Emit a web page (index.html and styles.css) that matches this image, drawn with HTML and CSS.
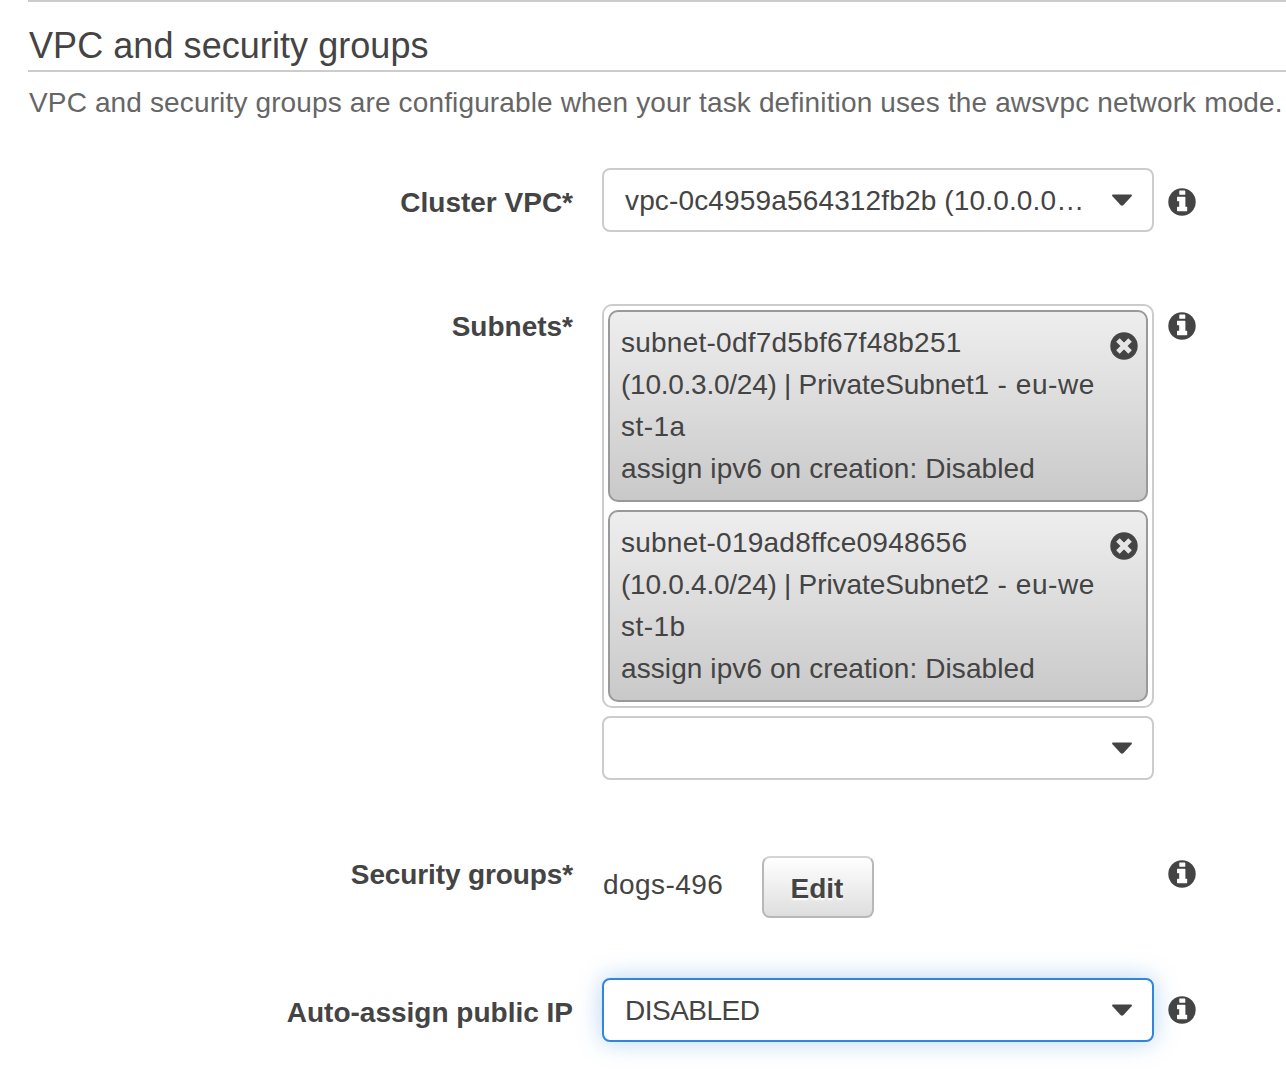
FILE: index.html
```html
<!DOCTYPE html>
<html lang="en">
<head>
<meta charset="utf-8">
<title>VPC and security groups</title>
<link rel="stylesheet" href="styles.css">
</head>
<body>
<svg class="sprite" width="0" height="0" aria-hidden="true">
  <symbol id="info" viewBox="0 0 28 28">
    <circle cx="14" cy="14" r="13.7" fill="#444"/>
    <path d="M11.3 3.2q0-.6.6-.6h4.800q.6 0 .6.6v3q0 .6-.6.6h-4.800q-.6 0-.6-.6zM9 9.300q0-.6.6-.6h7.200q.6 0 .6.6v9.500h1.200q.6 0 .6.6v3.200q0 .6-.6.6h-9q-.6 0-.6-.6v-3.200q0-.6.6-.6h1.600v-5.600h-1.600q-.6 0-.6-.6z" fill="#fff"/>
  </symbol>
  <symbol id="remove" viewBox="0 0 28 28">
    <circle cx="14" cy="14" r="13.7" fill="#444"/>
    <path d="M9.700 9.700l8.600 8.600M18.300 9.700l-8.600 8.600" stroke="#e6e6e6" stroke-width="5" stroke-linecap="square"/>
    <path d="M14 4.500l2.500 3.200L14 10.200l-2.500-2.500zM14 23.500l2.500-3.200L14 17.800l-2.500 2.500z" fill="#444"/>
  </symbol>
  <symbol id="caret" viewBox="0 0 20 12">
    <path d="M1 .4H19Q20.600.8 19.500 2.200L11.500 10.900Q10 12.500 8.500 10.900L.5 2.200Q-.6.8 1 .4Z" fill="#444"/>
  </symbol>
</svg>
<main class="section">
  <h2 class="title">VPC and security groups</h2>
  <p class="description">VPC and security groups are configurable when your task definition uses the awsvpc network mode.</p>

  <div class="row row-vpc">
    <div class="label">Cluster VPC*</div>
    <div class="select"><span class="value vpc-id">vpc-0c4959a564312fb2b (10.0.0.0…</span><svg class="caret"><use href="#caret"/></svg></div>
    <svg class="info"><use href="#info"/></svg>
  </div>

  <div class="row row-subnets">
    <div class="label">Subnets*</div>
    <div class="subnets">
      <div class="tokens">
        <div class="token">
          <div class="token-text"><div class="subnet-id">subnet-0df7d5bf67f48b251</div><div><span class="cidr">(10.0.3.0/24) | </span><span class="subnet-name">PrivateSubnet1</span><span class="zone"> - eu-we</span></div><div class="zone-end">st-1a</div><div class="assign">assign ipv6 on creation: Disabled</div></div>
          <svg class="remove"><use href="#remove"/></svg>
        </div>
        <div class="token">
          <div class="token-text"><div class="subnet-id">subnet-019ad8ffce0948656</div><div><span class="cidr">(10.0.4.0/24) | </span><span class="subnet-name">PrivateSubnet2</span><span class="zone"> - eu-we</span></div><div class="zone-end">st-1b</div><div class="assign">assign ipv6 on creation: Disabled</div></div>
          <svg class="remove"><use href="#remove"/></svg>
        </div>
      </div>
      <div class="select"><span></span><svg class="caret"><use href="#caret"/></svg></div>
    </div>
    <svg class="info"><use href="#info"/></svg>
  </div>

  <div class="row row-groups">
    <div class="label">Security groups*</div>
    <div class="groups"><span class="group-name">dogs-496</span><button class="edit" type="button">Edit</button></div>
    <svg class="info"><use href="#info"/></svg>
  </div>

  <div class="row row-ip">
    <div class="label">Auto-assign public IP</div>
    <div class="select focused"><span class="value ip-mode">DISABLED</span><svg class="caret"><use href="#caret"/></svg></div>
    <svg class="info"><use href="#info"/></svg>
  </div>
</main>
</body>
</html>
```
FILE: styles.css
```css
* { box-sizing: border-box; }
body {
  margin: 0;
  height: 1076px;
  overflow: hidden;
  background: #fff;
  color: #444;
  font: 28px/42px "Liberation Sans", Arial, sans-serif;
  white-space: nowrap;
}
svg { display: block; flex: none; }
.sprite { position: absolute; }
.section { margin-left: 28px; border-top: 2px solid #ccc; }
.title {
  margin: 0;
  height: 70px;
  padding: 19px 0 0 1px;
  border-bottom: 2px solid #ccc;
  font-size: 36px;
  font-weight: 400;
  line-height: 50px;
  letter-spacing: .06px;
}
.description {
  margin: 10px 0 0;
  padding-left: 1px;
  height: 42px;
  color: #666;
  letter-spacing: .138px;
}
.row {
  display: grid;
  grid-template-columns: 545px 552px 28px;
  column-gap: 29px;
  align-items: start;
}
.row > .info { margin-left: -15px; }
.label { text-align: right; font-weight: 700; }
.info, .remove { width: 28px; height: 28px; }
.row-vpc { margin-top: 44px; }
.row-subnets { margin-top: 72px; }
.row-groups { margin-top: 73px; }
.row-ip { margin-top: 60px; }
.row-vpc .label, .row-ip .label { margin-top: 14px; }
.row-subnets .label { margin-top: 2px; }
.row-groups .label { margin-top: 1px; letter-spacing: -.12px; }
.row-vpc .info { margin-top: 20px; }
.row-subnets .info { margin-top: 8px; }
.row-groups .info { margin-top: 7px; }
.row-ip .info { margin-top: 18px; }
.select {
  display: flex;
  align-items: center;
  justify-content: space-between;
  height: 64px;
  padding: 0 20px 0 21px;
  border: 2px solid #ccc;
  border-radius: 8px;
  background: #fff;
}
.value { padding-top: 2px; }
.vpc-id { letter-spacing: .15px; }
.ip-mode { letter-spacing: -.5px; }
.caret { width: 20px; height: 12px; }
.focused { border-color: #2e86de; box-shadow: 0 0 24px rgba(46, 134, 222, .35); }
.subnets { display: grid; gap: 8px; }
.tokens {
  display: grid;
  gap: 8px;
  padding: 4px;
  border: 2px solid #ccc;
  border-radius: 10px;
}
.token {
  display: flex;
  justify-content: space-between;
  height: 192px;
  padding: 10px 8px 10px 11px;
  border: 2px solid #999;
  border-radius: 10px;
  background: linear-gradient(#eee, #c9c9c9);
}
.subnet-id { letter-spacing: .24px; }
.cidr { letter-spacing: -.25px; }
.subnet-name { letter-spacing: -.07px; }
.zone { letter-spacing: .6px; }
.zone-end { letter-spacing: .45px; }
.assign { letter-spacing: .09px; }
.remove { margin-top: 10px; }
.groups { display: flex; padding-top: 3px; }
.group-name { width: 160px; padding: 8px 0 0 1px; letter-spacing: .45px; }
.edit {
  width: 112px;
  height: 62px;
  padding: 4px 2px 0 0;
  border: 2px solid #b8b8b8;
  border-top-color: #d4d4d4;
  border-radius: 8px;
  background: linear-gradient(#fff, #dedede);
  color: #444;
  font: 700 28px/42px "Liberation Sans", Arial, sans-serif;
  text-shadow: 0 2px 2px #fff;
}
```
